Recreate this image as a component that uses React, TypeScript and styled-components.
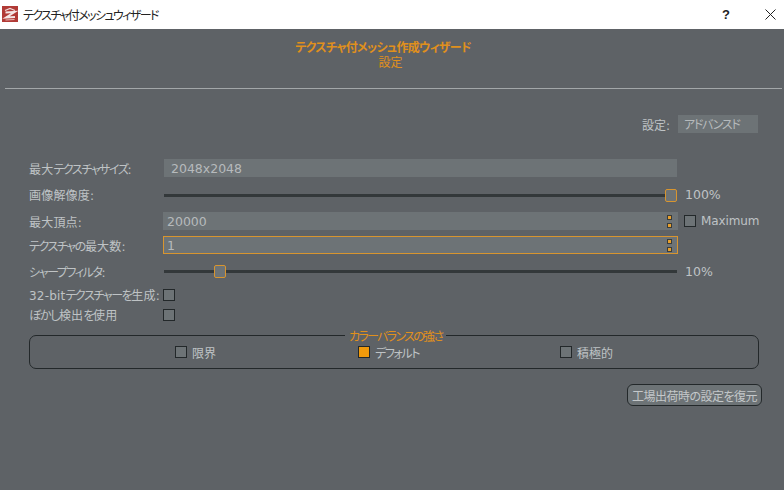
import React from "react";
import styled, { createGlobalStyle } from "styled-components";

const Global = createGlobalStyle`
  html, body { margin: 0; padding: 0; width: 784px; height: 490px; overflow: hidden; }
  body {
    font-family: "DejaVu Sans", "Noto Sans CJK JP", sans-serif;
    font-size: 12px;
    font-feature-settings: "palt";
    background: #5e6266;
  }
`;

const Window = styled.div`
  width: 784px;
  height: 490px;
  display: flex;
  flex-direction: column;
  background: #5e6266;
  color: #bfc3c5;
`;

const TitleBar = styled.div`
  height: 29px;
  flex: none;
  background: #fff;
  display: flex;
  align-items: center;
  padding: 0 8px 1px 2px;
  color: #222;
  box-sizing: border-box;
`;

const TitleText = styled.span`
  margin-left: 5px;
  flex: 1;
  font-family: "Noto Sans CJK JP", sans-serif;
  font-size: 12px;
  letter-spacing: -1.6px;
`;

const HelpGlyph = styled.span`
  font: bold 13px "Liberation Sans", sans-serif;
  color: #222;
  margin-right: 35px;
`;

const Header = styled.header`
  height: 60px;
  flex: none;
  box-sizing: border-box;
  padding-top: 10px;
  margin: 0 2px 0 5px;
  border-bottom: 1px solid #a3a7a9;
  text-align: center;
  color: #e0901c;
  font-family: "Noto Sans CJK JP", sans-serif;
  line-height: 15px;
  font-size: 12px;
`;

const HeaderTitle = styled.div`
  font-weight: 700;
  margin-left: -21px;
  letter-spacing: -0.7px;
`;

const HeaderSub = styled.div`
  margin-left: -6px;
`;

const Preset = styled.div`
  display: flex;
  justify-content: flex-end;
  align-items: center;
  gap: 8px;
  height: 18px;
  margin-top: 26px;
  padding-right: 26px;
`;

const PresetBox = styled.div`
  width: 80px;
  height: 18px;
  box-sizing: border-box;
  padding-left: 6px;
  line-height: 21px;
  background: #6d7376;
  color: #b6babc;
  font-size: 12px;
  letter-spacing: -1.3px;
`;

const Form = styled.div`
  display: flex;
  flex-direction: column;
  margin: 26px 0 0 29px;
  width: 730px;
`;

const Row = styled.div<{ $h: number; $gap?: number }>`
  display: grid;
  grid-template-columns: 134px 515px 81px;
  grid-template-rows: ${(p) => p.$h}px;
  height: ${(p) => p.$h}px;
  margin-top: ${(p) => p.$gap ?? 0}px;
  align-items: center;
`;

const Label = styled.div`
  font-size: 12px;
  white-space: nowrap;
  letter-spacing: 0.2px;
`;

const Kana = styled.span`
  letter-spacing: -1.4px;
`;

const Field = styled.div<{ $focus?: boolean; $plain?: boolean }>`
  height: 18px;
  box-sizing: border-box;
  margin: 0 ${(p) => (p.$plain ? 1 : 0)}px;
  background: #6d7376;
  border: 1px solid ${(p) => (p.$focus ? "#d8952f" : "#6d7376")};
  padding-left: ${(p) => (p.$plain ? 6 : 3)}px;
  display: flex;
  align-items: center;
  justify-content: space-between;
  font-size: 12.5px;
  color: #b6babc;
`;

const Spinner = styled.div`
  display: flex;
  flex-direction: column;
  gap: 3px;
  margin-right: 5px;
`;

const SpinDot = styled.span`
  width: 5px;
  height: 5px;
  box-sizing: border-box;
  background: #e8a02c;
  border: 1px solid #3a3c3a;
`;

const SliderTrack = styled.div<{ $nudge: number }>`
  height: 3px;
  margin: ${(p) => p.$nudge}px 0 0 1px;
  width: 513px;
  background: #33383a;
  position: relative;
`;

const Thumb = styled.div<{ $pos: number }>`
  position: absolute;
  top: -5px;
  left: ${(p) => p.$pos}px;
  width: 12px;
  height: 13px;
  box-sizing: border-box;
  border: 1px solid #d8952f;
  border-radius: 2px;
  background: #6d7376;
`;

const Suffix = styled.div`
  padding-left: 7px;
  font-size: 12.5px;
  white-space: nowrap;
`;

const MaxOption = styled.label`
  display: flex;
  align-items: center;
  gap: 5px;
  padding-left: 6px;
  font-size: 12px;
  letter-spacing: -0.1px;
  white-space: nowrap;
`;

const Box = styled.span<{ $on?: boolean }>`
  width: 12px;
  height: 12px;
  flex: none;
  display: block;
  border: 1px solid #23282a;
  box-sizing: border-box;
  background: ${(p) => (p.$on ? "#f09a0c" : "#6d7376")};
`;

const Group = styled.section`
  margin: 14px 0 0 29px;
  width: 730px;
  height: 34px;
  box-sizing: border-box;
  border: 1px solid #23282a;
  border-radius: 7px;
  position: relative;
`;

const Legend = styled.span`
  position: absolute;
  top: -7px;
  left: 315px;
  padding: 0 4px;
  background: #5e6266;
  color: #e0901c;
  font-family: "Noto Sans CJK JP", sans-serif;
  font-size: 12px;
  line-height: 14px;
  letter-spacing: -1.7px;
  white-space: nowrap;
`;

const GroupRow = styled.div`
  display: grid;
  grid-template-columns: 183px 202px 1fr;
  height: 100%;
  padding-left: 145px;
  align-items: center;
`;

const Option = styled.label`
  display: flex;
  align-items: center;
  gap: 5px;
  font-family: "Noto Sans CJK JP", sans-serif;
  font-size: 12px;
`;

const Footer = styled.div`
  display: flex;
  justify-content: flex-end;
  margin-top: 15px;
  padding-right: 22px;
`;

const ResetButton = styled.button`
  width: 135px;
  height: 22px;
  padding: 0;
  box-sizing: border-box;
  border: 1px solid #23282a;
  border-radius: 6px;
  background: #6d7376;
  color: #c4c8ca;
  font-family: "Noto Sans CJK JP", sans-serif;
  font-size: 12px;
  font-feature-settings: "palt";
  letter-spacing: -0.5px;
  white-space: nowrap;
`;

const Logo = () => (
  <svg width="16" height="16" viewBox="0 0 16 16">
    <rect width="16" height="16" fill="#b13a36" />
    <path d="M3 4.5 L8 2.5 L13 4.5" fill="none" stroke="#f1dcdb" strokeWidth="1.2" />
    <path d="M3.5 6.5 L12.5 6 L4 11.5 L13 11" fill="none" stroke="#f4e6e5" strokeWidth="2" />
    <path d="M3.5 14 L12.5 13.5" fill="none" stroke="#e8b8b5" strokeWidth="1" />
  </svg>
);

const CloseIcon = () => (
  <svg width="11" height="11" viewBox="0 0 11 11">
    <path d="M0.5 0.5 L10.5 10.5 M10.5 0.5 L0.5 10.5" stroke="#222" strokeWidth="1" fill="none" />
  </svg>
);

const Spin = () => (
  <Spinner>
    <SpinDot />
    <SpinDot />
  </Spinner>
);

export default function App() {
  return (
    <Window>
      <Global />
      <TitleBar>
        <Logo />
        <TitleText>テクスチャ付メッシュウィザード</TitleText>
        <HelpGlyph>?</HelpGlyph>
        <CloseIcon />
      </TitleBar>
      <Header>
        <HeaderTitle>テクスチャ付メッシュ作成ウィザード</HeaderTitle>
        <HeaderSub>設定</HeaderSub>
      </Header>
      <Preset>
        <span>設定:</span>
        <PresetBox>アドバンスド</PresetBox>
      </Preset>
      <Form>
        <Row $h={18}>
          <Label>
            最大<Kana>テクスチャサイズ</Kana>:
          </Label>
          <Field $plain>2048x2048</Field>
        </Row>
        <Row $h={35}>
          <Label>画像解像度:</Label>
          <SliderTrack $nudge={2}>
            <Thumb $pos={501} />
          </SliderTrack>
          <Suffix>100%</Suffix>
        </Row>
        <Row $h={18}>
          <Label>最大頂点:</Label>
          <Field>
            20000
            <Spin />
          </Field>
          <MaxOption>
            <Box />
            Maximum
          </MaxOption>
        </Row>
        <Row $h={18} $gap={6}>
          <Label>
            <Kana>テクスチャの</Kana>最大数:
          </Label>
          <Field $focus>
            1
            <Spin />
          </Field>
        </Row>
        <Row $h={34}>
          <Label>
            <Kana>シャープフィルタ</Kana>:
          </Label>
          <SliderTrack $nudge={1}>
            <Thumb $pos={50} />
          </SliderTrack>
          <Suffix>10%</Suffix>
        </Row>
        <Row $h={13}>
          <Label>
            32-bit<Kana>テクスチャーを</Kana>生成:
          </Label>
          <Box />
        </Row>
        <Row $h={13} $gap={7}>
          <Label>
            <Kana>ぼかし</Kana>検出<Kana>を</Kana>使用
          </Label>
          <Box />
        </Row>
      </Form>
      <Group>
        <Legend>カラーバランスの強さ</Legend>
        <GroupRow>
          <Option>
            <Box />
            限界
          </Option>
          <Option>
            <Box $on />
            <Kana>デフォルト</Kana>
          </Option>
          <Option>
            <Box />
            積極的
          </Option>
        </GroupRow>
      </Group>
      <Footer>
        <ResetButton>工場出荷時の設定を復元</ResetButton>
      </Footer>
    </Window>
  );
}
